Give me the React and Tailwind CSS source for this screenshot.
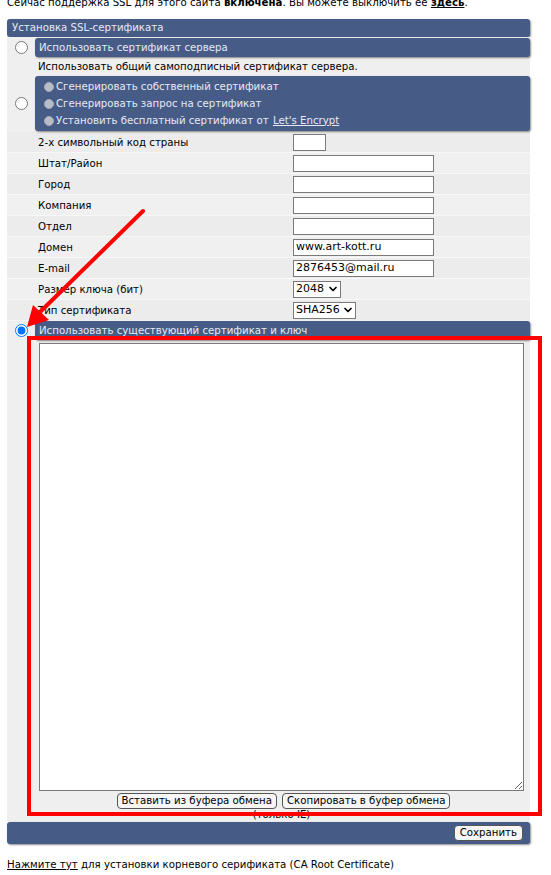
import { ChevronDown } from 'lucide-react'

const fields = [
  { label: '2-х символьный код страны', type: 'short' },
  { label: 'Штат/Район', type: 'text' },
  { label: 'Город', type: 'text' },
  { label: 'Компания', type: 'text' },
  { label: 'Отдел', type: 'text' },
  { label: 'Домен', type: 'text', value: 'www.art-kott.ru' },
  { label: 'E-mail', type: 'text', value: '2876453@mail.ru' },
  { label: 'Размер ключа (бит)', type: 'select', value: '2048', w: 'w-[48px]' },
  { label: 'Тип сертификата', type: 'select', value: 'SHA256', w: 'w-[63px]' },
]

function Bar({ children, className = '' }) {
  return (
    <div
      className={`bg-[#475b87] text-[#e6eaf2] rounded-[3px] shadow-[1px_1px_2px_rgba(0,0,0,0.45)] ${className}`}
    >
      {children}
    </div>
  )
}

function Radio({ checked }) {
  return (
    <input
      type="radio"
      name="cert"
      defaultChecked={checked}
      className="w-[13px] h-[13px] m-0 accent-[#0075ff]"
    />
  )
}

function Dot() {
  return (
    <span className="inline-block w-[10px] h-[10px] rounded-full bg-[#b9bdc6] border border-[#a5a9b3] mr-[1px] shrink-0" />
  )
}

function Field({ f }) {
  if (f.type === 'short') {
    return <span className="block w-[33px] h-[17px] bg-white border border-[#7a7a7a]" />
  }
  if (f.type === 'select') {
    return (
      <span className={`flex items-center justify-between ${f.w} h-[17px] bg-white border border-[#7a7a7a] pl-[2px] pr-[1px] text-[11px]`}>
        <span>{f.value}</span>
        <ChevronDown size={12} strokeWidth={3.5} />
      </span>
    )
  }
  return (
    <span className="flex items-center w-[141px] h-[17px] bg-white border border-[#7a7a7a] px-[2px] text-[11px]">
      {f.value}
    </span>
  )
}

export default function App() {
  return (
    <div className="relative w-[551px] h-[875px] overflow-hidden bg-white text-black text-[10.2px] font-['DejaVu_Sans',Verdana,sans-serif]">
      <p className="-mt-[4px] ml-[7px] leading-[14px]">
        Сейчас поддержка SSL для этого сайта <b>включена</b>. Вы можете выключить ее{' '}
        <b className="underline">здесь</b>.
      </p>

      <div className="mt-[9px] mx-[7px] w-[523px]">
        <Bar className="h-[18px] flex items-center px-[5px]">Установка SSL-сертификата</Bar>

        <div className="bg-[#efefef] pt-[1px]">
          <div className="flex items-center h-[19px]">
            <span className="w-[28px] flex justify-center"><Radio /></span>
            <Bar className="flex-1 h-[19px] flex items-center px-[4px]">Использовать сертификат сервера</Bar>
          </div>
          <div className="h-[19px] flex items-center pl-[31px] pt-[1px]">
            Использовать общий самоподписный сертификат сервера.
          </div>

          <div className="flex items-center">
            <span className="w-[28px] flex justify-center"><Radio /></span>
            <Bar className="flex-1 h-[55px] flex flex-col justify-center gap-[3px] pl-[9px]">
              <span className="flex items-center gap-[1px] leading-[14px]"><Dot />Сгенерировать собственный сертификат</span>
              <span className="flex items-center gap-[1px] leading-[14px]"><Dot />Сгенерировать запрос на сертификат</span>
              <span className="flex items-center gap-[1px] leading-[14px]">
                <Dot />Установить бесплатный сертификат от&nbsp;<span className="underline">Let's Encrypt</span>
              </span>
            </Bar>
          </div>

          <div className="mt-[1px]">
            {fields.map((f, i) => (
              <div
                key={f.label}
                className={`grid grid-cols-[286px_1fr] items-center h-[21px] border-b border-[#f7f7f7] ${i % 2 ? 'bg-[#f0f0f0]' : 'bg-[#ececec]'}`}
              >
                <span className="pl-[31px] pt-[2px]">{f.label}</span>
                <Field f={f} />
              </div>
            ))}
          </div>

          <div className="flex items-center h-[19px]">
            <span className="w-[28px] flex justify-center"><Radio checked /></span>
            <Bar className="flex-1 h-[19px] flex items-center px-[4px]">Использовать существующий сертификат и ключ</Bar>
          </div>

          <div className="pl-[32px] pr-[6px] pt-[3px] pb-[1px] flex flex-col items-center">
            <textarea className="block w-[485px] h-[448px] bg-white border border-[#7a7a7a] resize-y" />
            <div className="flex gap-[5px] mt-[2px] pl-[4px]">
              <button className="h-[16px] px-[4px] leading-none rounded-[4px] border border-[#555] bg-[#f6f6f6] text-[10.2px]">
                Вставить из буфера обмена
              </button>
              <button className="h-[16px] px-[4px] leading-none rounded-[4px] border border-[#555] bg-[#f6f6f6] text-[10.2px]">
                Скопировать в буфер обмена
              </button>
            </div>
            <span className="leading-[12px]">(только IE)</span>
          </div>
        </div>

        <Bar className="h-[22px] flex items-center justify-end pr-[7px]">
          <button className="h-[16px] px-[5px] leading-none rounded-[4px] border border-[#555] bg-[#f6f6f6] text-black text-[10.2px]">
            Сохранить
          </button>
        </Bar>
      </div>

      <p className="mt-[13px] ml-[7px]">
        <span className="underline">Нажмите тут</span> для установки корневого серификата (CA Root Certificate)
      </p>

      {/* annotation overlay */}
      <div className="absolute left-[27px] top-[336px] w-[515px] h-[480px] border-[4px] border-[#ff0000] pointer-events-none" />
      <svg className="absolute left-0 top-0 pointer-events-none" width="551" height="875">
        <line x1="143" y1="211" x2="38" y2="314" stroke="#ff0000" strokeWidth="4" strokeLinecap="round" />
        <polygon points="27,327 33,305 49,320" fill="#ff0000" />
      </svg>
    </div>
  )
}
